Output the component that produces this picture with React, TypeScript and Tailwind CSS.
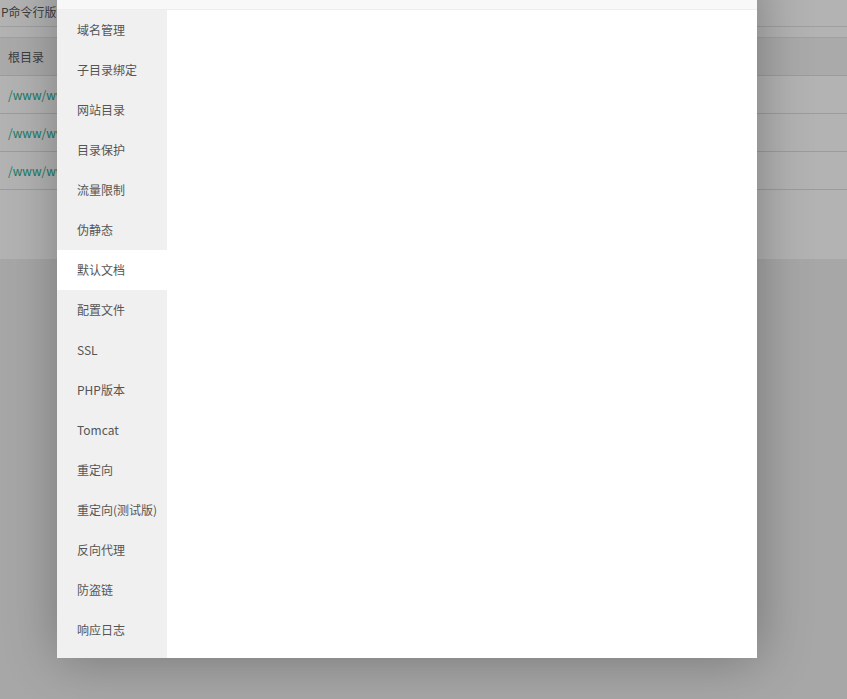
import React from "react";

const items = [
  "域名管理",
  "子目录绑定",
  "网站目录",
  "目录保护",
  "流量限制",
  "伪静态",
  "默认文档",
  "配置文件",
  "SSL",
  "PHP版本",
  "Tomcat",
  "重定向",
  "重定向(测试版)",
  "反向代理",
  "防盗链",
  "响应日志",
];

const font = { fontFamily: '"Noto Sans CJK SC", "Noto Sans", sans-serif' };

export default function App() {
  return (
    <div
      className="relative w-[847px] h-[699px] overflow-hidden bg-[#a7a7a7]"
      style={font}
    >
      {/* dimmed background page */}
      <div className="h-[259px] bg-[#b3b3b3] flex flex-col">
        <div className="h-[27px] border-b border-[#9f9f9f] flex items-center pl-[1px] pb-[2px] text-[12px] text-[#3d3d3d] whitespace-nowrap">
          P命令行版本
        </div>
        <div className="h-[11px] border-b border-[#a0a0a0]" />
        <div className="h-[38px] bg-[#aaaaaa] border-b border-[#9c9c9c] flex items-center pl-[8px] text-[12px] text-[#3d3d3d]">
          根目录
        </div>
        {[0, 1, 2].map((i) => (
          <div
            key={i}
            className="h-[38px] border-b border-[#9c9c9c] flex items-center pl-[8px] text-[12px] text-[#1a7a62] whitespace-nowrap"
          >
            /www/wwwroot
          </div>
        ))}
      </div>

      {/* modal */}
      <div className="absolute left-[57px] top-[-32px] w-[700px] bg-white shadow-[1px_1px_50px_rgba(0,0,0,0.3)] flex flex-col">
        <div className="h-[42px] bg-[#f8f8f8] border-b border-[#eeeeee]" />
        <div className="flex h-[648px]">
          <div className="w-[110px] bg-[#f0f0f0] flex flex-col">
            {items.map((t, i) => (
              <div
                key={t}
                className={
                  "h-[40px] flex items-center pl-[20px] text-[12px] text-[#555555] whitespace-nowrap " +
                  (i === 6 ? "bg-white" : "")
                }
              >
                {t}
              </div>
            ))}
          </div>
          <div className="flex-1 bg-white" />
        </div>
      </div>
    </div>
  );
}
